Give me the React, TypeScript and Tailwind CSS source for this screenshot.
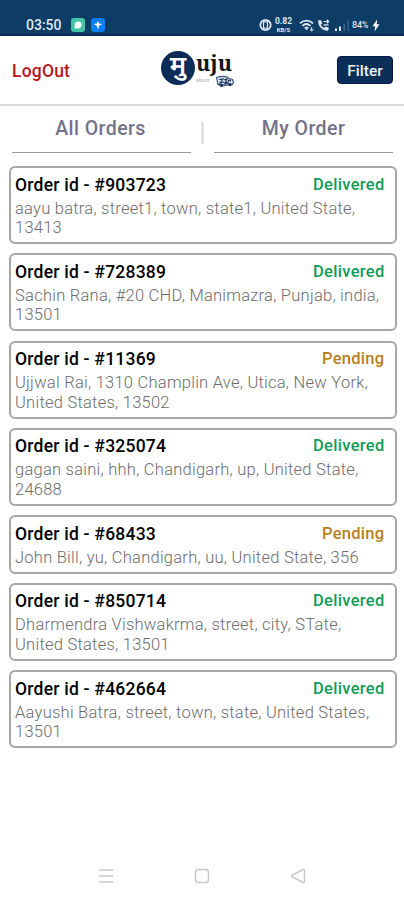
type Order = {
  id: string;
  status: 'Delivered' | 'Pending';
  address: string[];
};

const orders: Order[] = [
  { id: '903723', status: 'Delivered', address: ['aayu batra, street1, town, state1, United State,', '13413'] },
  { id: '728389', status: 'Delivered', address: ['Sachin Rana, #20 CHD, Manimazra, Punjab, india,', '13501'] },
  { id: '11369', status: 'Pending', address: ['Ujjwal Rai, 1310 Champlin Ave, Utica, New York,', 'United States, 13502'] },
  { id: '325074', status: 'Delivered', address: ['gagan saini, hhh, Chandigarh, up, United State,', '24688'] },
  { id: '68433', status: 'Pending', address: ['John Bill, yu, Chandigarh, uu, United State, 356'] },
  { id: '850714', status: 'Delivered', address: ['Dharmendra Vishwakrma, street, city, STate,', 'United States, 13501'] },
  { id: '462664', status: 'Delivered', address: ['Aayushi Batra, street, town, state, United States,', '13501'] },
];

function StatusBar() {
  return (
    <div className="flex h-9 items-end justify-between border-b-2 border-[#0b2b58] bg-[#0d3d66] pr-[24px] pl-[26px] text-[#dfe8f2]">
      <div className="flex h-[18px] items-center">
        <span className="w-[45px] text-[14px] leading-none font-medium">03:50</span>
        <svg width="14" height="14" viewBox="0 0 14 14">
          <rect width="14" height="14" rx="3" fill="#43c5a5" />
          <path d="M3.6 10.4V7a3.5 3.5 0 1 1 3.5 3.4z" fill="#f2fffb" />
        </svg>
        <svg className="ml-1.5" width="14" height="14" viewBox="0 0 14 14">
          <rect width="14" height="14" rx="3" fill="#0d7df2" />
          <path d="M7 3l1.2 2.6L11.3 6 8.2 7.8 7 11.5 5.8 7.8 2.7 6l3.1-.4z" fill="#fff" />
        </svg>
      </div>
      <div className="flex h-[18px] items-center">
        <svg width="13" height="14" viewBox="0 0 13 14" fill="none" stroke="currentColor">
          <circle cx="6.5" cy="7" r="5.2" strokeWidth="1.8" />
          <rect x="4.5" y="3.8" width="4" height="6.4" strokeWidth="1.2" />
        </svg>
        <div className="ml-0.5 w-[19px] text-center font-bold">
          <div className="text-[8.5px] leading-[9px]">0.82</div>
          <div className="text-[6px] leading-[7px]">KB/S</div>
        </div>
        <svg className="ml-1.5" width="16" height="13" viewBox="0 0 16 13" fill="none" stroke="currentColor">
          <path d="M1 4.3C4.8.8 10.2.8 14 4.3" strokeWidth="1.8" />
          <path d="M3.4 6.8c2.5-2.2 5.7-2.2 8.2 0" strokeWidth="1.7" />
          <path d="M5.6 8.6L7.5 11l2-2.4c-1.2-.9-2.7-.9-3.9 0z" fill="currentColor" strokeWidth=".6" />
          <path d="M12.7 8v4M10.9 10.3l1.8 1.7 1.8-1.7" strokeWidth="1" />
        </svg>
        <svg className="ml-0.5" width="13" height="13" viewBox="0 0 13 13" fill="none" stroke="currentColor">
          <path d="M1.5 1.5C1 7 5 11.5 11 11.5l.5-2.7-3-1-1.4 1.4C5.3 8.3 4.2 7 3.6 5.6L5 4.2 4 1.5z" fill="currentColor" strokeWidth=".5" />
          <path d="M6.5 2.5h5M9.8.8l1.9 1.7-1.9 1.7M11.5 5.8h-5" strokeWidth="1.2" />
        </svg>
        <svg className="ml-1" width="16" height="13" viewBox="0 0 16 13" fill="currentColor">
          <path d="M1 9.5h2V12H1zM5 7.5h2V12H5z" />
          <path d="M9.5 5h1.5v7H9.5zM13.5 1.5h1.2V12h-1.200z" opacity=".28" />
        </svg>
        <span className="ml-0.5 w-[20px] text-[9px] leading-none font-medium tracking-tight">84%</span>
        <svg width="8" height="13" viewBox="0 0 8 13" fill="#fff">
          <path d="M5.2.5L.5 7.3h2.7L2.5 12.5 7.5 5.3H4.7z" />
        </svg>
      </div>
    </div>
  );
}

function Logo() {
  return (
    <div className="relative flex h-[38px] w-[78px] items-start">
      <div className="flex size-[34px] shrink-0 items-center justify-center rounded-full bg-[#0c2b59]">
        <span className="font-['Noto_Sans_Devanagari','Noto_Sans',sans-serif] text-[26px] leading-none font-semibold text-white">मु</span>
      </div>
      <span className="-mt-px ml-px font-['Noto_Serif','DejaVu_Serif',serif] text-[21.5px] leading-[26px] font-bold text-[#161616]">uju</span>
      <span className="absolute top-[26px] left-[35px] font-['Liberation_Serif',serif] text-[6px] leading-none tracking-wider text-[#999]">short</span>
      <svg className="absolute top-[24px] left-[54px]" width="20" height="13" viewBox="0 0 20 13">
        <path d="M1.5 2.5Q7 .5 12 2l2 1.5 3.5 1 1 3-1.5 2.5H13L8 11l-5-1.5z" fill="#d7dfeb" stroke="#3b5380" strokeWidth="1.1" />
        <path d="M4 4.5l4-.5-3 4 4-1M9 5l3-1-2 4 3-1 1-2 2 1M3 9.5l13-1" fill="none" stroke="#17315f" strokeWidth="1.1" />
        <circle cx="6.5" cy="10.5" r="1.5" fill="#17315f" />
        <circle cx="15" cy="9.5" r="1.5" fill="#17315f" />
      </svg>
    </div>
  );
}

function Header() {
  return (
    <header className="flex h-[70px] items-center justify-between border-b-2 border-[#dcdcdc] pr-[11px] pl-3">
      <button className="w-[149px] pt-0.5 text-left text-[17.5px] font-medium tracking-[0.2px] text-[#b5161b]">LogOut</button>
      <Logo />
      <div className="flex flex-1 justify-end">
        <button className="h-7 w-14 rounded-[4px] border border-[#081a4c] bg-[#0c2f59] pt-[3px] text-[15.5px] leading-none font-medium text-[#eef2f7]">
          Filter
        </button>
      </div>
    </header>
  );
}

function Tabs() {
  return (
    <nav className="flex h-[47px] justify-between pr-[11px] pl-3 text-[19.5px] font-medium tracking-[0.45px] text-[#74728a]">
      <button className="h-full w-[179px] border-b border-[#999] pr-0.5 pb-px">All Orders</button>
      <div className="mt-4 h-[22px] w-[3px] bg-[#e2e2e2]" />
      <button className="h-full w-[179px] border-b border-[#999] pb-px">My Order</button>
    </nav>
  );
}

function OrderCard({ order }: { order: Order }) {
  return (
    <li className="rounded-[6px] border-2 border-[#a6a6a6] px-1 pt-[5.5px] pb-[4.5px]">
      <div className="flex justify-between pr-[6px] leading-[22px] font-medium">
        <span className="text-[17.5px] tracking-[0.23px] text-black">Order id - #{order.id}</span>
        <span
          className={
            order.status === 'Delivered'
              ? 'text-[16.5px] tracking-[0.3px] text-[#109c58]'
              : 'text-[16.5px] tracking-[0.3px] text-[#b8801c]'
          }
        >
          {order.status}
        </span>
      </div>
      <div className="mt-[3px] text-[16.5px] leading-[19.6px] font-light tracking-[0.25px] whitespace-nowrap text-[#6c6c6c]">
        {order.address.map((line) => (
          <p key={line}>{line}</p>
        ))}
      </div>
    </li>
  );
}

function NavBar() {
  return (
    <div className="flex h-[49px] items-center justify-between px-[98px] text-[#c8c8c8]">
      <svg width="16" height="16" viewBox="0 0 16 16" stroke="currentColor" strokeWidth="1.5">
        <path d="M1 2h14M1 8h14M1 14h14" />
      </svg>
      <svg width="16" height="16" viewBox="0 0 16 16" fill="none" stroke="currentColor" strokeWidth="1.5">
        <rect x="1.5" y="1.5" width="13" height="13" rx="3" />
      </svg>
      <svg width="16" height="16" viewBox="0 0 16 16" fill="none" stroke="currentColor" strokeWidth="1.5">
        <path d="M13 1.5L2.2 7.2q-1.2.8 0 1.6L13 14.5q1.5.5 1.5-1V2.500q0-1.500-1.500-1z" />
      </svg>
    </div>
  );
}

export default function App() {
  return (
    <div className="flex h-[900px] w-[404px] flex-col overflow-hidden bg-white font-[Roboto,sans-serif]">
      <StatusBar />
      <Header />
      <Tabs />
      <ul className="mt-[13px] flex flex-1 flex-col gap-[9.1px] pr-[7.5px] pl-[9px]">
        {orders.map((order) => (
          <OrderCard key={order.id} order={order} />
        ))}
      </ul>
      <NavBar />
    </div>
  );
}
